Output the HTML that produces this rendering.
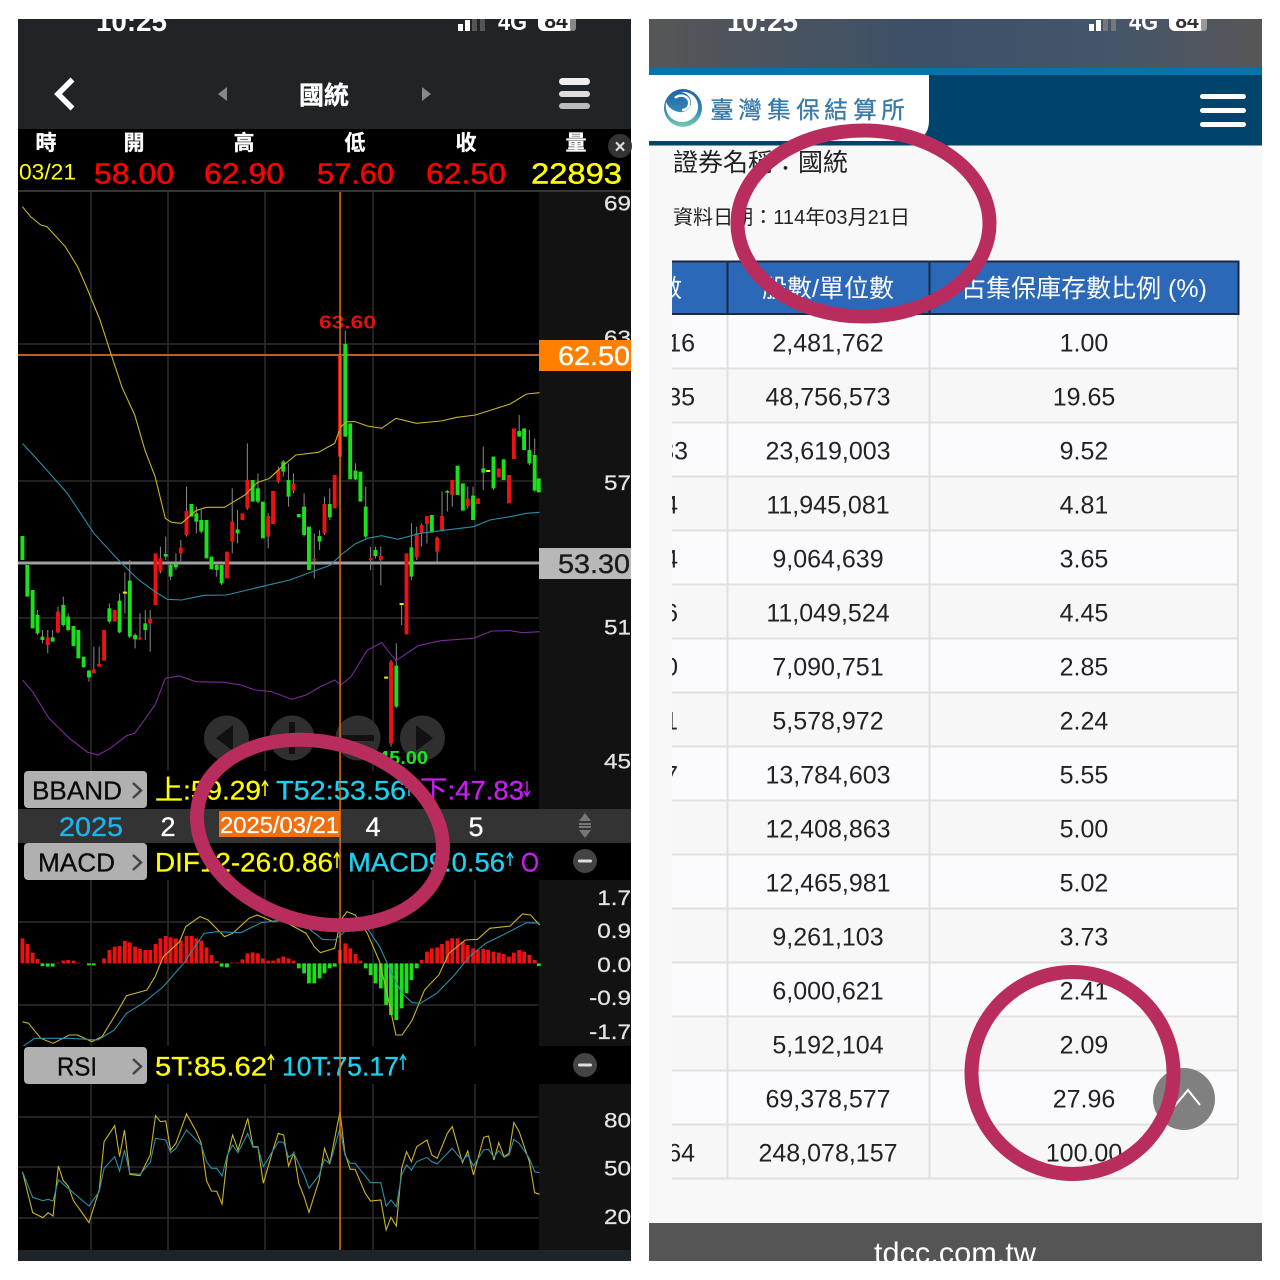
<!DOCTYPE html>
<html><head><meta charset="utf-8"><style>
html,body{margin:0;padding:0;background:#fff}
svg{display:block;filter:blur(.3px)}
text{font-family:"Liberation Sans","Noto Sans CJK TC",sans-serif}
.n *{vector-effect:non-scaling-stroke}
</style></head><body>
<svg width="1280" height="1280" viewBox="0 0 1280 1280" xmlns="http://www.w3.org/2000/svg">
<defs>
<linearGradient id="st" x1="0" x2="1" y1="0" y2="0"><stop offset="0" stop-color="#565656"/><stop offset=".45" stop-color="#3c5068"/><stop offset=".75" stop-color="#45556a"/><stop offset="1" stop-color="#565656"/></linearGradient>
<linearGradient id="lg" x1="0" x2="0" y1="0" y2="1"><stop offset="0" stop-color="#1f63a8"/><stop offset=".55" stop-color="#2f86b4"/><stop offset="1" stop-color="#7ccab4"/></linearGradient>
</defs>
<rect width="1280" height="1280" fill="#fff"/>

<!-- LEFT PANEL -->
<rect x="18" y="19" width="613" height="1242" fill="#000"/>
<rect x="18" y="19" width="613" height="110" fill="#212426"/>
<text x="96" y="31" font-size="28" font-weight="bold" fill="#fff" textLength="71" lengthAdjust="spacingAndGlyphs">10:25</text>
<path d="M458 24h5v7h-5zM465 20h5v11h-5z" fill="#fff"/><path d="M472 17h5v14h-5zM480 17h5v14h-5z" fill="#555"/>
<text x="498" y="30" font-size="24" font-weight="bold" fill="#fff" textLength="29" lengthAdjust="spacingAndGlyphs">4G</text>
<rect x="538" y="10" width="36" height="21" rx="6" fill="#fff"/><rect x="570" y="12" width="6" height="19" rx="3" fill="#888"/>
<text x="556" y="28" font-size="21" font-weight="bold" fill="#222" text-anchor="middle">84</text>
<path d="M72.500 79.500L58 94l14.500 14.500" fill="none" stroke="#fff" stroke-width="5.500"/>
<path d="M227 87v14l-9-7zM422 87v14l9-7z" fill="#888"/>
<text x="324" y="104" font-size="25" font-weight="bold" fill="#fff" text-anchor="middle" stroke="#fff" stroke-width=".3">國統</text>
<rect x="559" y="78" width="31" height="7" rx="3.500" fill="#eee"/><rect x="559" y="91" width="31" height="6" rx="3" fill="#ddd"/><rect x="559" y="103" width="31" height="6" rx="3" fill="#bbb"/>

<g font-size="21" font-weight="bold" fill="#fff" text-anchor="middle" stroke="#fff" stroke-width=".3">
<text x="46" y="150">時</text><text x="134" y="150">開</text><text x="244" y="150">高</text><text x="355" y="150">低</text><text x="466" y="150">收</text><text x="576" y="150">量</text></g>
<circle cx="620" cy="146" r="12" fill="#333"/><text x="620" y="153" font-size="19" font-weight="bold" fill="#ddd" text-anchor="middle">×</text>
<text x="19" y="179.500" font-size="22" fill="#ff0" textLength="57" lengthAdjust="spacingAndGlyphs">03/21</text>
<g font-size="29" fill="#f00" stroke="#f00" stroke-width=".45"><text x="94" y="183.500" textLength="80" lengthAdjust="spacingAndGlyphs">58.00</text><text x="204" y="183.500" textLength="80" lengthAdjust="spacingAndGlyphs">62.90</text><text x="317" y="183.500" textLength="77" lengthAdjust="spacingAndGlyphs">57.60</text><text x="426" y="183.500" textLength="80" lengthAdjust="spacingAndGlyphs">62.50</text></g>
<text x="531" y="183.500" font-size="29" fill="#ff0" stroke="#ff0" stroke-width=".45" textLength="91" lengthAdjust="spacingAndGlyphs">22893</text>
<rect x="18" y="190" width="613" height="2" fill="#333"/>

<!-- axis bg -->
<rect x="539" y="192" width="92" height="617" fill="#121212"/>
<rect x="539" y="880" width="92" height="166" fill="#121212"/>
<rect x="539" y="1084" width="92" height="166" fill="#121212"/>

<!-- grid -->
<g stroke="#2c2c2c" stroke-width="1.500" fill="none">
<path d="M91 192V771M168 192V771M265 192V771M373 192V771M475 192V771"/>
<path d="M18 344H539M18 481H539M18 618H539"/>
<path d="M91 880V1046M168 880V1046M265 880V1046M373 880V1046M475 880V1046M18 922H539M18 1005H539"/>
<path d="M91 1084V1250M168 1084V1250M265 1084V1250M373 1084V1250M475 1084V1250M18 1117H539M18 1167H539M18 1218H539"/>
</g>
<!-- nav buttons -->
<g fill="#2f2f2f"><circle cx="226.500" cy="738" r="22.500"/><circle cx="292" cy="738" r="22.500"/><circle cx="358" cy="738" r="22.500"/><circle cx="422.500" cy="738" r="22.500"/></g>
<path d="M233 725v26l-17-13zM416 725v26l17-13z" fill="#111"/><rect x="289" y="722" width="6" height="32" fill="#111"/><rect x="342" y="735" width="32" height="6" fill="#111"/>

<!-- horizontal markers -->
<rect x="18" y="354" width="521" height="2" fill="#b8602a"/>
<rect x="18" y="561.500" width="521" height="3" fill="#a0a0a0"/>

<!-- price chart -->
<g class="n" transform="translate(0,320) scale(.40816,.33333)" fill="none">
<path stroke="#8a8a8a" stroke-width="1" d="M92 870V945M104 930V970M117 930V1000M129 930V965M142 860V940M155 830V920M167 880V935M218 1050V1085M230 980V1060M243 980V1040M268 850V910M293 820V940M306 757V880M318 720V955M331 940V985M343 880V960M356 870V960M368 870V995M393 680V760M406 650V720M418 730V780M431 700V750M443 660V730M457 500V650M481 560V640M493 570V640M531 730V770M543 740V795M569 505V700M582 570V670M606 370V570M632 460V550M657 580V685M682 440V490M694 420V470M707 430V560M719 460V520M745 520V650M770 640V775M783 630V690M795 530V645M808 505V600M846 32V350M871 430V480M896 500V655M908 680V750M920 680V715M933 680V795M958 1020V1280M971 970V1165M984 850V915M1008 610V780M1021 620V720M1033 610V680M1046 590V670M1071 650V725M1083 515V635M1096 510V575M1108 480V560M1146 500V565M1159 500V600M1184 380V510M1209 410V510M1272 285V350M1297 330V435M1310 355V515"/>
<path stroke="#1de01d" stroke-width="3.900" d="M55 648V720M67 735V830M80 810V925M92 885V940M104 950V960M129 952V965M155 855V915M167 890V930M180 918V978M192 930V1015M205 1010V1042M218 1052V1072M268 865V905M293 842V937M318 782V950M331 945V958M356 910V930M406 702V710M418 735V770M431 732V742M469 552V590M481 580V605M493 600V635M506 600V715M518 710V748M531 735V750M543 735V790M582 628V640M619 480V545M632 505V545M644 545V655M694 425V455M707 480V530M732 582V592M745 560V645M757 620V750M783 648V665M808 552V592M846 72V350M858 310V478M871 452V478M883 455V545M896 560V650M920 690V708M971 1037V1160M1008 682V770M1058 585V638M1096 513V518M1121 437V525M1134 490V572M1159 527V600M1184 445V458M1209 410V505M1234 418V480M1272 333V350M1284 325V390M1297 390V430M1310 405V512M1320 475V517"/>
<path stroke="#ee1111" stroke-width="3.900" d="M117 952V975M142 875V937M230 1048V1060M243 1032V1040M255 930V1022M281 870V905M343 953V958M368 897V910M381 700V855M393 715V755M443 682V700M457 573V645M556 695V775M569 605V665M594 580V600M606 480V565M657 588V650M669 513V612M682 450V485M719 490V512M770 716V722M795 552V640M820 465V565M833 105V410M908 715V720M933 708V720M958 1025V1270M996 700V943M1021 640V712M1033 615V638M1046 588V612M1071 653V695M1083 588V630M1108 480V525M1146 535V558M1171 535V552M1222 445V472M1247 465V550M1259 325V417"/>
<path stroke="#ee0" stroke-width="2" d="M301 818H311M979 852H989M941 1073H951M1191 453H1201"/>
<polyline stroke="#c8b428" stroke-width="1.100" points="55,-340 75,-310 100,-285 115,-280 160,-220 190,-160 215,-90 245,0 270,95 300,205 330,285 355,390 380,470 405,595 420,607 445,610 480,572 505,562 550,562 600,525 630,488 660,475 700,430 725,405 780,397 820,370 835,320 850,305 870,305 900,318 935,325 970,295 1020,310 1080,303 1120,292 1165,285 1250,252 1290,222 1322,218"/>
<polyline stroke="#2a8fa8" stroke-width="1.100" points="55,370 100,430 165,520 230,640 290,720 340,780 380,815 410,838 445,840 500,826 555,825 650,797 710,780 810,735 835,705 870,672 900,655 935,647 975,658 1030,640 1080,632 1160,620 1200,600 1250,590 1290,580 1322,577"/>
<polyline stroke="#7a2a9a" stroke-width="1.100" points="55,1080 80,1115 120,1195 170,1255 215,1297 240,1305 270,1285 310,1247 330,1240 380,1155 405,1075 440,1068 480,1085 550,1087 590,1095 625,1110 665,1115 715,1138 750,1125 785,1100 820,1080 835,1095 860,1070 900,990 935,968 970,1022 1025,977 1080,962 1160,955 1205,933 1250,932 1280,938 1322,935"/>
</g>
<text x="319" y="328.500" font-size="18" font-weight="bold" fill="#e01010" textLength="57" lengthAdjust="spacingAndGlyphs">63.60</text>
<text x="378" y="764" font-size="18" font-weight="bold" fill="#20e020" textLength="50" lengthAdjust="spacingAndGlyphs">45.00</text>

<!-- axis labels -->
<g transform="translate(631,0) scale(1.13,1) translate(-631,0)" font-size="21.500" fill="#e4e4e4" text-anchor="end" stroke="#e4e4e4" stroke-width=".25">
<text x="631" y="210.500">69</text><text x="631" y="345">63</text><text x="631" y="490">57</text><text x="631" y="634.500">51</text><text x="631" y="768.500">45</text>
<text x="631" y="905">1.7</text><text x="631" y="938">0.9</text><text x="631" y="972">0.0</text><text x="631" y="1005">-0.9</text><text x="631" y="1039">-1.7</text>
<text x="631" y="1127.500">80</text><text x="631" y="1175.500">50</text><text x="631" y="1224">20</text>
</g>
<rect x="539" y="340" width="92" height="31" fill="#ff8000"/>
<text x="558" y="365" font-size="27" fill="#fff" stroke="#fff" stroke-width=".35" textLength="72" lengthAdjust="spacingAndGlyphs">62.50</text>
<rect x="539" y="548" width="92" height="31" fill="#b8b8b8"/>
<text x="558" y="573" font-size="27" fill="#1a1a1a" stroke="#1a1a1a" stroke-width=".35" textLength="72" lengthAdjust="spacingAndGlyphs">53.30</text>

<!-- BBAND row -->
<rect x="18" y="771" width="521" height="38" fill="#000"/>
<rect x="24" y="771" width="123" height="37" rx="4" fill="#b0b0b0"/>
<text x="32" y="799.500" font-size="26" fill="#0a0a0a" stroke="#0a0a0a" stroke-width=".3" textLength="90" lengthAdjust="spacingAndGlyphs">BBAND</text>
<path d="M133 783l8 7.500-8 7.500" fill="none" stroke="#444" stroke-width="2.500"/>
<text x="155" y="799.500" font-size="27" fill="#ff0" stroke="#ff0" stroke-width=".3" textLength="106" lengthAdjust="spacingAndGlyphs">上:59.29</text>
<text x="276" y="799.500" font-size="27" fill="#1ad2f0" stroke="#1ad2f0" stroke-width=".3" textLength="130" lengthAdjust="spacingAndGlyphs">T52:53.56</text>
<text x="420" y="799.500" font-size="27" fill="#c81ef0" stroke="#c81ef0" stroke-width=".3" textLength="104" lengthAdjust="spacingAndGlyphs">下:47.83</text>
<path d="M265 781v15M262 786l3-5 3 5" stroke="#ff0" stroke-width="1.500" fill="none"/>
<path d="M409 783v13M406 788l3-5 3 5" stroke="#1ad2f0" stroke-width="1.500" fill="none"/>
<path d="M527 781v15M524 791l3 5 3-5" stroke="#c81ef0" stroke-width="1.500" fill="none"/>

<!-- date row -->
<rect x="18" y="809" width="613" height="34" fill="#333"/>
<text x="59" y="836" font-size="27" fill="#1ab4f0" stroke="#1ab4f0" stroke-width=".3" textLength="64" lengthAdjust="spacingAndGlyphs">2025</text>
<text x="168" y="836" font-size="27" fill="#fff" stroke="#fff" stroke-width=".3" text-anchor="middle">2</text>
<rect x="219" y="811" width="121" height="26" fill="#f07010"/>
<text x="220" y="833" font-size="23.500" fill="#fff" stroke="#fff" stroke-width=".25" textLength="119" lengthAdjust="spacingAndGlyphs">2025/03/21</text>
<text x="373" y="836" font-size="27" fill="#fff" stroke="#fff" stroke-width=".3" text-anchor="middle">4</text>
<text x="476" y="836" font-size="27" fill="#fff" stroke="#fff" stroke-width=".3" text-anchor="middle">5</text>
<path d="M585 813l6 8h-12zM585 838l6-8h-12z" fill="#777"/><path d="M579 824h12M579 827h12" stroke="#777" stroke-width="2"/>

<!-- MACD row -->
<rect x="18" y="843" width="613" height="37" fill="#000"/>
<rect x="24" y="843" width="123" height="37" rx="4" fill="#b0b0b0"/>
<text x="38" y="871.500" font-size="26" fill="#0a0a0a" stroke="#0a0a0a" stroke-width=".3" textLength="77" lengthAdjust="spacingAndGlyphs">MACD</text>
<path d="M133 855l8 7.500-8 7.500" fill="none" stroke="#444" stroke-width="2.500"/>
<text x="155" y="871.500" font-size="27" fill="#ff0" stroke="#ff0" stroke-width=".3" textLength="178" lengthAdjust="spacingAndGlyphs">DIF12-26:0.86</text>
<text x="348" y="871.500" font-size="27" fill="#1ad2f0" stroke="#1ad2f0" stroke-width=".3" textLength="157" lengthAdjust="spacingAndGlyphs">MACD9:0.56</text>
<text x="521" y="871.500" font-size="27" fill="#c81ef0" stroke="#c81ef0" stroke-width=".3" textLength="18" lengthAdjust="spacingAndGlyphs">O</text>
<path d="M337 853v15M334 858l3-5 3 5" stroke="#ff0" stroke-width="1.500" fill="none"/>
<path d="M510 853v13M507 858l3-5 3 5" stroke="#1ad2f0" stroke-width="1.500" fill="none"/>
<circle cx="585" cy="861" r="12" fill="#444"/><rect x="578" y="859.500" width="14" height="3" rx="1.500" fill="#ddd"/>

<!-- MACD chart -->
<g class="n" transform="translate(0,730) scale(.40816,.33333)" fill="none">
<path stroke="#ee1111" stroke-width="3.800" d="M55 625V700M67 642V700M80 668V700M92 687V700M142 698V700M155 692V700M167 690V700M180 692V700M192 698V700M255 685V700M268 660V700M281 650V700M293 648V700M306 633V700M318 637V700M331 650V700M343 657V700M356 660V700M368 660V700M381 642V700M393 625V700M406 618V700M418 622V700M431 625V700M443 632V700M457 618V700M469 618V700M481 625V700M493 632V700M506 652V700M518 675V700M531 693V700M569 698V700M582 698V700M594 688V700M606 670V700M619 667V700M632 670V700M644 685V700M657 692V700M669 692V700M682 685V700M694 680V700M707 685V700M719 692V700M833 660V700M846 640V700M858 655V700M871 672V700M883 692V700M1033 690V700M1046 665V700M1058 655V700M1071 652V700M1083 642V700M1096 632V700M1108 625V700M1121 625V700M1134 635V700M1146 645V700M1159 655V700M1171 660V700M1184 657V700M1196 660V700M1209 665V700M1222 668V700M1234 672V700M1247 680V700M1259 668V700M1272 660V700M1284 665V700M1297 675V700M1310 690V700"/>
<path stroke="#1de01d" stroke-width="3.800" d="M104 700V708M117 700V710M129 700V710M218 700V706M230 700V706M543 700V710M556 700V712M732 700V715M745 700V730M757 700V760M770 700V760M783 700V745M795 700V730M808 700V715M820 700V710M896 700V715M908 700V735M920 700V760M933 700V775M946 700V825M958 700V855M971 700V870M984 700V835M996 700V790M1008 700V750M1021 700V715M1320 700V708"/>
<polyline stroke="#c8b428" stroke-width="1.100" points="55,875 70,880 100,925 130,940 170,915 190,915 225,935 250,920 285,850 310,797 360,780 380,740 400,680 440,635 455,590 490,560 510,570 550,620 570,610 610,565 630,555 670,575 690,570 750,610 770,650 785,668 820,655 835,570 850,545 870,555 900,610 930,695 950,800 970,915 985,915 1010,870 1040,780 1075,735 1100,670 1140,630 1170,628 1200,595 1250,588 1280,552 1300,555 1322,585"/>
<polyline stroke="#2a8fa8" stroke-width="1.100" points="55,950 85,925 130,925 170,925 240,930 280,900 310,850 350,820 400,770 450,700 500,610 530,605 590,608 640,578 690,570 740,580 790,628 820,630 850,600 900,595 930,650 960,730 985,790 1010,818 1030,820 1070,790 1110,740 1150,680 1190,640 1240,610 1290,578 1322,580"/>
</g>

<!-- RSI row -->
<rect x="18" y="1046" width="613" height="38" fill="#000"/>
<rect x="24" y="1047" width="123" height="37" rx="4" fill="#b0b0b0"/>
<text x="57" y="1075.500" font-size="26" fill="#0a0a0a" stroke="#0a0a0a" stroke-width=".3" textLength="40" lengthAdjust="spacingAndGlyphs">RSI</text>
<path d="M133 1059l8 7.500-8 7.500" fill="none" stroke="#444" stroke-width="2.500"/>
<text x="155" y="1075.500" font-size="27" fill="#ff0" stroke="#ff0" stroke-width=".3" textLength="112" lengthAdjust="spacingAndGlyphs">5T:85.62</text>
<text x="282" y="1075.500" font-size="27" fill="#1ad2f0" stroke="#1ad2f0" stroke-width=".3" textLength="117" lengthAdjust="spacingAndGlyphs">10T:75.17</text>
<path d="M271 1055v15M268 1060l3-5 3 5" stroke="#ff0" stroke-width="1.500" fill="none"/>
<path d="M403 1055v15M400 1060l3-5 3 5" stroke="#1ad2f0" stroke-width="1.500" fill="none"/>
<circle cx="585" cy="1065" r="12" fill="#444"/><rect x="578" y="1063.500" width="14" height="3" rx="1.500" fill="#ddd"/>

<!-- RSI chart -->
<g class="n" transform="translate(0,1040) scale(.40816,.33333)" fill="none">
<polyline stroke="#c8b428" stroke-width="1.100" points="55,395 80,518 105,533 118,518 130,528 143,378 155,422 167,438 180,482 205,525 218,548 243,450 255,305 281,257 293,350 305,270 318,403 343,407 368,345 381,227 393,245 406,243 418,330 431,310 457,222 481,275 493,310 506,422 518,453 531,454 544,492 557,350 570,285 583,330 607,235 620,320 632,320 645,430 670,325 682,280 695,285 707,378 720,338 732,430 745,470 757,517 782,420 795,325 808,370 833,215 845,340 858,388 870,388 895,460 908,483 933,480 946,570 958,532 971,558 984,385 996,335 1008,365 1021,320 1046,300 1058,345 1071,355 1096,280 1108,260 1133,368 1146,333 1160,405 1185,292 1197,288 1210,360 1222,308 1235,350 1247,340 1259,247 1272,275 1297,365 1310,458 1322,463"/>
<polyline stroke="#2a8fa8" stroke-width="1.100" points="55,395 80,472 105,482 118,478 130,483 143,420 167,445 218,498 243,455 255,385 281,350 293,393 305,330 318,400 343,403 368,367 381,295 406,300 418,338 431,325 457,270 493,315 506,365 518,385 531,385 544,408 557,345 570,315 583,338 607,280 620,322 632,322 645,380 682,305 695,307 707,352 720,340 745,405 757,445 782,405 795,358 808,372 833,265 845,345 858,370 870,370 908,428 933,428 946,498 958,480 971,500 984,405 996,375 1008,390 1021,365 1046,352 1058,365 1071,372 1108,325 1133,362 1146,345 1160,378 1185,330 1197,328 1210,352 1222,332 1235,352 1247,345 1259,298 1272,310 1297,355 1310,395 1322,398"/>
</g>
<rect x="18" y="1250" width="613" height="11" fill="#1e2428"/>
<!-- cursor -->
<rect x="339.300" y="192" width="1.500" height="1058" fill="#e0701c"/>

<!-- RIGHT PANEL -->
<rect x="649" y="19" width="613" height="1242" fill="#f8f8f8"/>
<rect x="649" y="19" width="613" height="49" fill="url(#st)"/>
<text x="727" y="31" font-size="28" font-weight="bold" fill="#fff" textLength="71" lengthAdjust="spacingAndGlyphs">10:25</text>
<path d="M1089 24h5v7h-5zM1096 20h5v11h-5z" fill="#fff"/><path d="M1103 17h5v14h-5zM1111 17h5v14h-5z" fill="#777"/>
<text x="1129" y="30" font-size="24" font-weight="bold" fill="#fff" textLength="29" lengthAdjust="spacingAndGlyphs">4G</text>
<rect x="1169" y="10" width="36" height="21" rx="6" fill="#fff"/><rect x="1201" y="12" width="6" height="19" rx="3" fill="#999"/>
<text x="1187" y="28" font-size="21" font-weight="bold" fill="#333" text-anchor="middle">84</text>
<rect x="649" y="68" width="613" height="7" fill="#0a72aa"/>
<rect x="649" y="75" width="613" height="70.500" fill="#00446e"/>
<path d="M649 75H929V120Q929 141 908 141H649Z" fill="#fff"/>
<circle cx="683" cy="108" r="19" fill="url(#lg)"/>
<path d="M666 102c-2 13 8 21 18 20 9-1 15-9 14-17-1-9-9-14-17-13 6 1 11 6 10 12-1 5-6 9-12 8-6-1-11-5-13-10z" fill="#fff"/>
<path d="M675 98c4-4 12-3 14 3 1 5-2 9-7 9" fill="none" stroke="#fff" stroke-width="2.500"/>
<g font-size="23.500" fill="#3a7aa8" stroke="#3a7aa8" stroke-width=".35" text-anchor="middle">
<text x="722" y="118">臺</text><text x="750" y="118">灣</text><text x="779" y="118">集</text><text x="808" y="118">保</text><text x="836" y="118">結</text><text x="865" y="118">算</text><text x="893" y="118">所</text></g>
<g fill="#fff"><rect x="1200" y="94" width="46" height="5" rx="2.500"/><rect x="1200" y="108" width="46" height="5" rx="2.500"/><rect x="1200" y="122" width="46" height="5" rx="2.500"/></g>
<text x="673" y="171" font-size="25" fill="#222">證券名稱：國統</text>
<text x="673" y="224" font-size="20" fill="#222" textLength="237" lengthAdjust="spacingAndGlyphs">資料日期：114年03月21日</text>

<!-- table -->
<g fill="#fcfcfe">
<rect x="672" y="315" width="566" height="54" fill="#fbfbfd"/><rect x="672" y="369" width="566" height="54" fill="#f7f7f7"/><rect x="672" y="423" width="566" height="54" fill="#fbfbfd"/><rect x="672" y="477" width="566" height="54" fill="#f7f7f7"/><rect x="672" y="531" width="566" height="54" fill="#fbfbfd"/><rect x="672" y="585" width="566" height="54" fill="#f7f7f7"/><rect x="672" y="639" width="566" height="54" fill="#fbfbfd"/><rect x="672" y="693" width="566" height="54" fill="#f7f7f7"/><rect x="672" y="747" width="566" height="54" fill="#fbfbfd"/><rect x="672" y="801" width="566" height="54" fill="#f7f7f7"/><rect x="672" y="855" width="566" height="54" fill="#fbfbfd"/><rect x="672" y="909" width="566" height="54" fill="#f7f7f7"/><rect x="672" y="963" width="566" height="54" fill="#fbfbfd"/><rect x="672" y="1017" width="566" height="54" fill="#f7f7f7"/><rect x="672" y="1071" width="566" height="54" fill="#fbfbfd"/><rect x="672" y="1125" width="566" height="54" fill="#f7f7f7"/></g>
<rect x="672" y="261" width="566" height="54" fill="#2b68b8"/>
<path d="M672 261.500H1238.500V314H672M727.500 261V314M929.500 261V314" fill="none" stroke="#1a2a45" stroke-width="2"/>
<g stroke="#e0e0e0" stroke-width="2" fill="none">
<path d="M672 368.500H1238M672 422.500H1238M672 476.500H1238M672 530.500H1238M672 584.500H1238M672 638.500H1238M672 692.500H1238M672 746.500H1238M672 800.500H1238M672 854.500H1238M672 908.500H1238M672 962.500H1238M672 1016.500H1238M672 1070.500H1238M672 1124.500H1238M672 1178.500H1238M727.500 315V1179M929.500 315V1179M1238 315V1179"/>
</g>
<text x="828" y="297" font-size="25" fill="#fff" text-anchor="middle">股數/單位數</text>
<text x="1084" y="297" font-size="25" fill="#fff" text-anchor="middle">占集保庫存數比例 (%)</text>
<text x="682" y="297" font-size="25" fill="#fff" text-anchor="end">數</text>
<g font-size="25" fill="#222" transform="translate(0,-.6)">
<g text-anchor="end"><text x="695" y="352">16</text><text x="695" y="406">35</text><text x="688" y="460">33</text><text x="678" y="514">4</text><text x="678" y="568">4</text><text x="678" y="622">6</text><text x="678" y="676">0</text><text x="678" y="730">1</text><text x="678" y="784">7</text><text x="695" y="1162">64</text></g>
<g text-anchor="middle">
<text x="828" y="352">2,481,762</text><text x="828" y="406">48,756,573</text><text x="828" y="460">23,619,003</text><text x="828" y="514">11,945,081</text><text x="828" y="568">9,064,639</text><text x="828" y="622">11,049,524</text><text x="828" y="676">7,090,751</text><text x="828" y="730">5,578,972</text><text x="828" y="784">13,784,603</text><text x="828" y="838">12,408,863</text><text x="828" y="892">12,465,981</text><text x="828" y="946">9,261,103</text><text x="828" y="1000">6,000,621</text><text x="828" y="1054">5,192,104</text><text x="828" y="1108">69,378,577</text><text x="828" y="1162">248,078,157</text>
<text x="1084" y="352">1.00</text><text x="1084" y="406">19.65</text><text x="1084" y="460">9.52</text><text x="1084" y="514">4.81</text><text x="1084" y="568">3.65</text><text x="1084" y="622">4.45</text><text x="1084" y="676">2.85</text><text x="1084" y="730">2.24</text><text x="1084" y="784">5.55</text><text x="1084" y="838">5.00</text><text x="1084" y="892">5.02</text><text x="1084" y="946">3.73</text><text x="1084" y="1000">2.41</text><text x="1084" y="1054">2.09</text><text x="1084" y="1108">27.96</text><text x="1084" y="1162">100.00</text>
</g></g>
<rect x="649" y="255" width="23" height="930" fill="#f8f8f8"/>
<rect x="649" y="1223" width="613" height="38" fill="#555"/>
<text x="874" y="1263" font-size="30" fill="#fff" textLength="162" lengthAdjust="spacingAndGlyphs">tdcc.com.tw</text>
<circle cx="1184" cy="1099" r="31" fill="#808080"/>
<path d="M1173 1108L1188 1090L1200 1105" fill="none" stroke="#fff" stroke-width="2"/>

<!-- mask outer margins -->
<rect x="0" y="0" width="1280" height="19" fill="#fff"/>
<rect x="0" y="1261" width="1280" height="19" fill="#fff"/>

<!-- rings -->
<g fill="none" stroke="#b92d5e" stroke-width="14">
<ellipse cx="320" cy="832.500" rx="125" ry="90" transform="rotate(15 320 832.500)"/>
<ellipse cx="863.500" cy="223.500" rx="126" ry="93"/>
<circle cx="1072.500" cy="1073" r="101"/>
</g>
</svg>
</body></html>
